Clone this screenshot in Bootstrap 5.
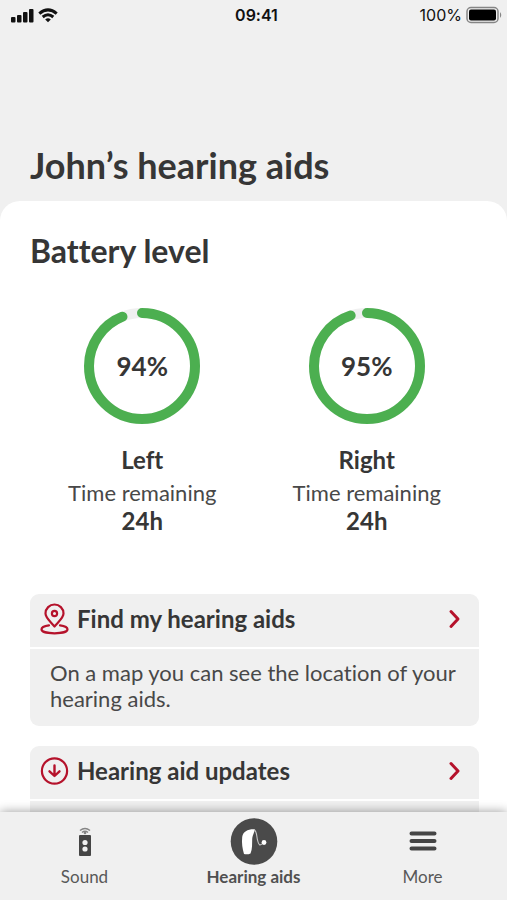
<!DOCTYPE html>
<html lang="en">
<head>
<meta charset="utf-8">
<meta name="viewport" content="width=device-width, initial-scale=1">
<title>Hearing aids</title>
<link href="https://cdn.jsdelivr.net/npm/bootstrap@5.3.0/dist/css/bootstrap.min.css" rel="stylesheet">
<style>
  body { font-family: Lato, "Open Sans", sans-serif; font-variant-ligatures: none; color: #363636; background: #f0f0f0; }
  .status-bar { font-family: Inter, "Liberation Sans", sans-serif; font-size: 16px; line-height: 30px; color: #111; padding: 0 4px 0 10px; }
  .status-bar > * { flex: 1 1 0; }
  .status-time { font-weight: 600; }
  .page-title { font-size: 36px; line-height: 44px; font-weight: 700; padding: 113px 30px 14px; }
  .sheet { border-radius: 20px 20px 0 0; padding: 31px 28px 0 30px; }
  .section-title { font-size: 32px; line-height: 38px; font-weight: 700; }
  .levels { margin-top: 36px; margin-bottom: 59px; }
  .ring { width: 120px; height: 120px; }
  .ring circle { fill: none; stroke-width: 10; }
  .ring .track { stroke: #f0f0f0; }
  .ring .level { stroke: #4caf50; stroke-linecap: round; }
  .ring-label { font-size: 26px; line-height: 32px; font-weight: 700; }
  .side-name { font-size: 24px; line-height: 30px; font-weight: 700; margin-top: 19px; }
  .remaining { font-size: 22px; line-height: 28px; color: #484848; margin-top: 4px; }
  .hours { font-size: 24px; line-height: 28px; font-weight: 700; }
  .panel { background: #f0f0f0; border-radius: 9px; margin-bottom: 20px; }
  .panel-link { height: 55px; padding: 0 16px 3px 10px; border-bottom: 2px solid #fff; font-size: 24px; font-weight: 700; color: inherit; }
  .panel-text { font-size: 22px; line-height: 26px; min-height: 77px; padding: 11px 20px 14px; color: #484848; }
  .red { stroke: #b5122b; fill: none; stroke-linecap: round; stroke-linejoin: round; }
  .tab-bar { background: #f0f0f0; box-shadow: 0 0 10px rgba(0, 0, 0, .4); height: 88px; z-index: 1; }
  .tab-link { flex: 1 1 0; color: #585858; font-size: 17px; line-height: 24px; padding-top: 5px; }
  .tab-link.active { font-weight: 700; color: #505050; }
</style>
<script src="https://cdn.jsdelivr.net/npm/bootstrap@5.3.0/dist/js/bootstrap.bundle.min.js"></script>
</head>
<body>
<div class="d-flex flex-column vh-100 overflow-hidden">
  <header class="flex-shrink-0">
    <div class="status-bar d-flex align-items-center">
      <div class="d-flex align-items-center gap-1">
        <svg width="24" height="15" viewBox="0 0 24 15" fill="#111" role="img" aria-label="Signal strength"><rect x="1" y="9" width="4.500" height="5.500" rx="1"/><rect x="7" y="7" width="4.500" height="7.500" rx="1"/><rect x="13" y="4" width="4.500" height="10.500" rx="1"/><rect x="19" y="1" width="4.500" height="13.500" rx="1"/></svg>
        <svg width="20" height="15" viewBox="0 0 20 15" fill="none" stroke="#111" stroke-width="3" role="img" aria-label="Wi-Fi"><path d="M1.3 5.6Q10-1.9 18.700 5.600M4.700 9Q10 4.600 15.300 9"/><path d="M7.200 11.400Q10 9.200 12.800 11.400L10 14.300Z" fill="#111" stroke="none"/></svg>
      </div>
      <div class="status-time text-center">09:41</div>
      <div class="d-flex align-items-center justify-content-end gap-1">
        <span>100%</span>
        <svg width="37" height="18" viewBox="0 0 37 18" role="img" aria-label="Battery full"><rect x="1" y="1.500" width="31" height="15" rx="4" fill="none" stroke="#858585" stroke-width="1.500"/><rect x="3" y="3.500" width="27" height="11" rx="2"/><path d="M34 6Q36.500 9 34 12Z" fill="#858585"/></svg>
      </div>
    </div>
    <h1 class="page-title mb-0">John’s hearing aids</h1>
  </header>

  <main class="sheet bg-white flex-grow-1 overflow-hidden">
    <h2 class="section-title mb-0">Battery level</h2>
    <div class="levels row gx-0 text-center">
      <section class="col-6">
        <div class="d-grid justify-content-center align-items-center position-relative">
          <svg class="ring mx-auto" viewBox="0 0 120 120" aria-hidden="true"><circle class="track" cx="60" cy="60" r="53"/><circle class="level" cx="60" cy="60" r="53" pathLength="100" style="stroke-dasharray: 94 100" transform="rotate(-90 60 60)"/></svg>
          <div class="ring-label position-absolute top-50 start-50 translate-middle">94%</div>
        </div>
        <h3 class="side-name mb-0">Left</h3>
        <div class="remaining">Time remaining</div>
        <div class="hours">24h</div>
      </section>
      <section class="col-6">
        <div class="d-grid justify-content-center align-items-center position-relative">
          <svg class="ring mx-auto" viewBox="0 0 120 120" aria-hidden="true"><circle class="track" cx="60" cy="60" r="53"/><circle class="level" cx="60" cy="60" r="53" pathLength="100" style="stroke-dasharray: 95 100" transform="rotate(-90 60 60)"/></svg>
          <div class="ring-label position-absolute top-50 start-50 translate-middle">95%</div>
        </div>
        <h3 class="side-name mb-0">Right</h3>
        <div class="remaining">Time remaining</div>
        <div class="hours">24h</div>
      </section>
    </div>

    <section class="panel">
      <a href="#find" class="panel-link d-flex align-items-center gap-2 text-decoration-none">
        <svg class="red" width="29" height="32" viewBox="0 0 29 32" stroke-width="2.200" aria-hidden="true"><path d="M14.500 23.500C11 19 5.500 15 5.500 10.500A9 9 0 0 1 23.500 10.500C23.500 15 18 19 14.500 23.500Z"/><circle cx="14.500" cy="10.500" r="2.600"/><path d="M9 22.300C4 23 1.500 24.500 1.500 26.200C1.500 28.600 7 30.300 14.500 30.300S27.500 28.600 27.500 26.200C27.500 24.500 25 23 20 22.300"/></svg>
        <span class="flex-grow-1">Find my hearing aids</span>
        <svg class="red" width="18" height="20" viewBox="0 0 18 20" stroke-width="3" aria-hidden="true"><path d="M6 2.500L13 10L6 17.500"/></svg>
      </a>
      <div class="panel-text">On a map you can see the location of your hearing aids.</div>
    </section>

    <section class="panel">
      <a href="#updates" class="panel-link d-flex align-items-center gap-2 text-decoration-none">
        <svg class="red" width="29" height="30" viewBox="0 0 29 30" stroke-width="2.200" aria-hidden="true"><circle cx="14.500" cy="15" r="12.600"/><path stroke-width="2.400" d="M14.500 9.500V19.700M9.500 15.300L14.500 20L19.500 15.300"/></svg>
        <span class="flex-grow-1">Hearing aid updates</span>
        <svg class="red" width="18" height="20" viewBox="0 0 18 20" stroke-width="3" aria-hidden="true"><path d="M6 2.500L13 10L6 17.500"/></svg>
      </a>
      <div class="panel-text"></div>
    </section>
  </main>

  <nav class="tab-bar d-flex flex-shrink-0 text-center position-relative" aria-label="Main">
    <a href="#sound" class="tab-link text-decoration-none">
      <svg class="d-block mx-auto" width="48" height="48" viewBox="0 0 48 48" aria-hidden="true"><g fill="none" stroke="#858585" stroke-width="1.500"><path d="M19 13.500Q24 9.500 29 13.500M21 15.500Q24 13 27 15.500"/></g><circle cx="24" cy="16" r="1.300" fill="#858585"/><rect x="18" y="18" width="12" height="21" rx="1" fill="#454545"/><circle cx="24" cy="25.500" r="2.600" fill="#f0f0f0"/><circle cx="24" cy="32" r="2.600" fill="#f0f0f0"/></svg>
      Sound
    </a>
    <a href="#aids" class="tab-link active text-decoration-none" aria-current="page">
      <svg class="d-block mx-auto" width="48" height="48" viewBox="0 0 48 48" aria-hidden="true"><circle cx="24" cy="24.500" r="23.300" fill="#4a4a4a"/><path d="M14 37C12.500 32 11.500 26 12.200 20C13 14.500 18 12 24.500 12.300C25 14.500 22.500 18 22.200 22C22 27 22.500 32 20.500 36.500C18.500 37.500 16 37.600 14 37Z" fill="#fff"/><path d="M24 12.500C27 14.500 26.500 19 27.500 23C28.500 28 30 29.500 33 26" fill="none" stroke="#c8c8c8" stroke-width="1.100"/><circle cx="34" cy="25.500" r="2.400" fill="#fff"/></svg>
      Hearing aids
    </a>
    <a href="#more" class="tab-link text-decoration-none">
      <svg class="d-block mx-auto" width="48" height="48" viewBox="0 0 48 48" stroke="#454545" stroke-width="4" stroke-linecap="round" aria-hidden="true"><path d="M12.500 16.500H35.500M12.500 24H35.500M12.500 31.500H35.500"/></svg>
      More
    </a>
  </nav>
</div>
</body>
</html>
